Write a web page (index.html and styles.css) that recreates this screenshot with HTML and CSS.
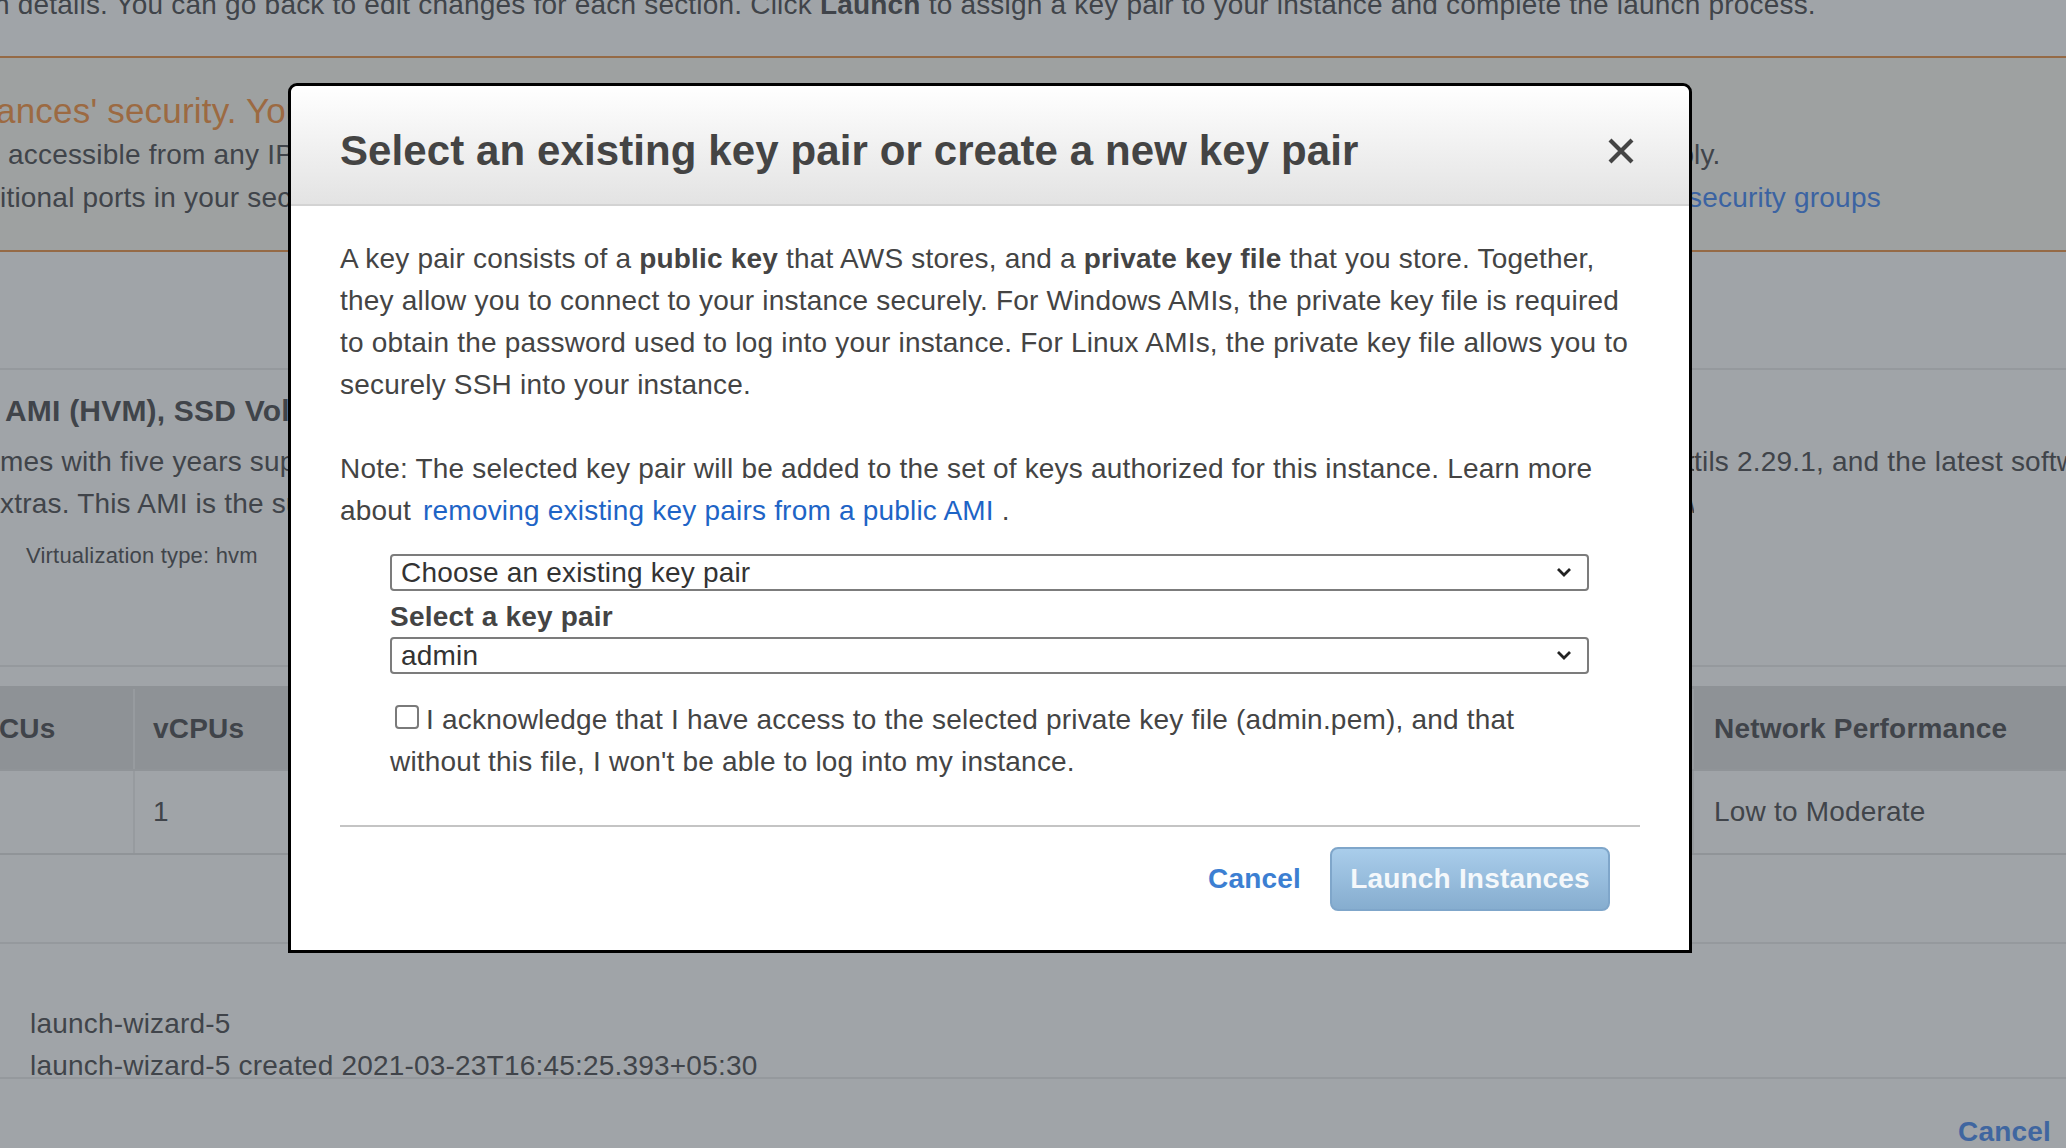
FILE: index.html
```html
<!DOCTYPE html>
<html lang="en">
<head>
<meta charset="utf-8">
<title>Review Instance Launch</title>
<link rel="stylesheet" href="styles.css">
</head>
<body>
  <div class="page">
    <p class="intro">n details. You can go back to edit changes for each section. Click <b>Launch</b> to assign a key pair to your instance and complete the launch process.</p>

    <section class="warning">
      <div class="warn-title">ances' security. Your security group, launch-wizard-5, is open to the world.</div>
      <div class="row2">
        <span class="l">&nbsp;accessible from any IP address. We recommend that you update your security group rules to allow access from known IP addresses on</span>
        <span class="r">ly.</span>
      </div>
      <div class="row2">
        <span class="l">itional ports in your security group to facilitate access to the application or service you're running, e.g., HTTP (80) for web servers. Edit</span>
        <a class="r link-dim shift">security groups</a>
      </div>
    </section>

    <div class="sep sep-a"></div>

    <section class="ami">
      <h2 class="ami-title">AMI (HVM), SSD Volume Type - ami-0bcf5425cdc1d8a85 (64-bit x86)</h2>
      <div class="ami-desc">
        <div class="row2">
          <span class="l">mes with five years support. It provides Linux kernel 4.14 tuned for optimal performance on Amazon EC2, systemd 219, GCC 7.3, Glibc 2.26, Binu</span>
          <span class="r">tils 2.29.1, and the latest software packages through extras.</span>
        </div>
        <div class="row2">
          <span class="l">xtras. This AMI is the successor of the Amazon Linux AMI that is now under maintenance only mode and has been removed from this wizard.</span>
          <span class="r"></span>
        </div>
      </div>
      <div class="virt">Virtualization type: hvm</div>
    </section>

    <div class="sep sep-b"></div>

    <div class="table">
      <div class="tr th">
        <div class="td c1"><span class="cut">ECUs</span></div>
        <div class="td c2">vCPUs</div>
        <div class="td c3">Network Performance</div>
      </div>
      <div class="tr">
        <div class="td c1"></div>
        <div class="td c2">1</div>
        <div class="td c3">Low to Moderate</div>
      </div>
    </div>

    <div class="sep sep-c"></div>

    <div class="sg">
      <div>launch-wizard-5</div>
      <div>launch-wizard-5 created 2021-03-23T16:45:25.393+05:30</div>
    </div>

    <div class="page-actions"><a class="page-cancel">Cancel</a></div>
  </div>

  <div class="modal" role="dialog">
    <div class="modal-header">
      <h1 class="modal-title">Select an existing key pair or create a new key pair</h1>
      <svg class="close" width="28" height="28" viewBox="0 0 28 28" aria-label="Close">
        <path d="M3 3 L25 25 M25 3 L3 25" stroke="#444" stroke-width="4.2" stroke-linecap="butt" fill="none"/>
      </svg>
    </div>
    <div class="modal-body">
      <p>A key pair consists of a <b>public key</b> that AWS stores, and a <b>private key file</b> that you store. Together, they allow you to connect to your instance securely. For Windows AMIs, the private key file is required to obtain the password used to log into your instance. For Linux AMIs, the private key file allows you to securely SSH into your instance.</p>
      <p class="note">Note: The selected key pair will be added to the set of keys authorized for this instance. Learn more about <a class="link">removing existing key pairs from a public AMI</a> .</p>

      <div class="form">
        <div class="select">
          <span>Choose an existing key pair</span>
          <svg class="chev" width="16" height="11" viewBox="0 0 16 11"><path d="M2 2 L8 8 L14 2" stroke="#222" stroke-width="2.8" fill="none"/></svg>
        </div>
        <div class="label">Select a key pair</div>
        <div class="select">
          <span>admin</span>
          <svg class="chev" width="16" height="11" viewBox="0 0 16 11"><path d="M2 2 L8 8 L14 2" stroke="#222" stroke-width="2.8" fill="none"/></svg>
        </div>
        <p class="ack"><span class="checkbox"></span>I acknowledge that I have access to the selected private key file (admin.pem), and that without this file, I won't be able to log into my instance.</p>
      </div>

      <div class="divider"></div>

      <div class="modal-footer">
        <a class="cancel">Cancel</a>
        <button class="launch" type="button">Launch Instances</button>
      </div>
    </div>
  </div>
</body>
</html>
```

FILE: styles.css
```css
* {
  box-sizing: border-box;
  margin: 0;
  padding: 0;
}

html, body {
  width: 2066px;
  height: 1148px;
  overflow: hidden;
}

body {
  position: relative;
  background: #a0a4a8;
  font-family: "Liberation Sans", Arial, Helvetica, sans-serif;
  font-size: 28px;
  line-height: 42px;
  letter-spacing: 0.2px;
  color: #40444a;
}

/* ---------- background page (under overlay) ---------- */
.page {
  width: 2066px;
}

.intro {
  margin-top: -16px;
  margin-left: -6px;
  white-space: nowrap;
}

.warning {
  margin-top: 30px;
  background: #9ea1a1;
  border-top: 2px solid #956a46;
  border-bottom: 2px solid #956a46;
  padding: 31px 0 31px;
}

.warn-title {
  font-size: 35px;
  line-height: 44px;
  color: #9c6a42;
  white-space: nowrap;
  margin-left: -4px;
}

.row2 {
  display: grid;
  grid-template-columns: 1694px 1fr;
  white-space: nowrap;
  line-height: 43px;
}

.row2 .l {
  overflow: hidden;
}

.row2 .r {
  overflow: hidden;
}

.link-dim {
  color: #3b63a2;
}

.shift {
  margin-left: -6px;
}

.sep {
  height: 2px;
  background: #95999d;
}

.sep-a {
  margin-top: 116px;
}

.ami {
  padding-top: 20px;
}

.ami-title {
  font-size: 30px;
  line-height: 42px;
  font-weight: bold;
  white-space: nowrap;
  padding-left: 5px;
}

.ami-desc {
  margin-top: 9px;
}

.ami-desc .row2 {
  line-height: 42px;
}

.virt {
  margin-top: 15px;
  padding-left: 26px;
  font-size: 22px;
  line-height: 32px;
}

.sep-b {
  margin-top: 93px;
}

.table {
  margin-top: 19px;
}

.tr {
  display: grid;
  grid-template-columns: 135px 1557px 1fr;
  height: 84px;
  border-bottom: 2px solid #909498;
}

.th {
  height: 85px;
  padding-top: 3px;
  background: #8e9296;
  font-weight: bold;
}

.td {
  display: flex;
  align-items: center;
  white-space: nowrap;
  overflow: hidden;
}

.c1 {
  border-right: 2px solid #979b9f;
}

.c2 {
  padding-left: 18px;
}

.c3 {
  padding-left: 20px;
  border-left: 2px solid #979b9f;
}

.cut {
  margin-left: -20px;
}

.sep-c {
  margin-top: 87px;
}

.sg {
  margin-top: 59px;
  padding-left: 30px;
  height: 76px;
  border-bottom: 2px solid #95999d;
  white-space: nowrap;
}

.page-actions {
  margin-top: 32px;
  display: flex;
  justify-content: flex-end;
  padding-right: 15px;
}

.page-cancel {
  font-weight: bold;
  color: #3f66a0;
}

/* ---------- modal ---------- */
.modal {
  position: absolute;
  left: 288px;
  top: 83px;
  width: 1404px;
  height: 870px;
  background: #fff;
  border: 3px solid #000;
  border-radius: 9px 9px 0 0;
  color: #444;
}

.modal-header {
  height: 120px;
  padding: 11px 54px 0 49px;
  display: flex;
  align-items: center;
  justify-content: space-between;
  background: linear-gradient(#ffffff, #e3e3e3);
  border-bottom: 2px solid #d3d3d3;
  border-radius: 7px 7px 0 0;
}

.modal-title {
  font-size: 42px;
  line-height: 50px;
  font-weight: bold;
  letter-spacing: 0.1px;
  color: #444;
}

.close {
  display: block;
}

.modal-body {
  padding: 32px 49px 0 49px;
}

.note {
  margin-top: 42px;
}

.link {
  color: #1e64c6;
  margin-left: 4px;
}

.form {
  padding: 0 51px 0 50px;
  margin-top: 22px;
}

.select {
  height: 37px;
  border: 2px solid #7c7c7c;
  border-radius: 4px;
  padding: 0 15px 0 9px;
  display: flex;
  align-items: center;
  justify-content: space-between;
  line-height: 33px;
  color: #333;
}

.chev {
  display: block;
}

.label {
  margin-top: 6px;
  font-weight: bold;
  line-height: 40px;
}

.ack {
  margin-top: 25px;
}

.checkbox {
  display: inline-block;
  width: 24px;
  height: 24px;
  border: 2px solid #7a7a7a;
  border-radius: 4px;
  margin: 0 7px 0 5px;
  vertical-align: baseline;
  background: #fff;
}

.divider {
  margin-top: 42px;
  height: 2px;
  background: #c4c4c4;
}

.modal-footer {
  margin-top: 20px;
  padding-right: 30px;
  display: flex;
  justify-content: flex-end;
  align-items: center;
  gap: 29px;
}

.cancel {
  font-weight: bold;
  color: #3c7fd2;
}

.launch {
  width: 280px;
  height: 64px;
  border: 2px solid #7fa6ca;
  border-radius: 8px;
  background: linear-gradient(#a9cdeb, #86adcf);
  color: #f4f8fb;
  font-family: "Liberation Sans", Arial, Helvetica, sans-serif;
  font-size: 28px;
  font-weight: bold;
  letter-spacing: 0.2px;
}
```
